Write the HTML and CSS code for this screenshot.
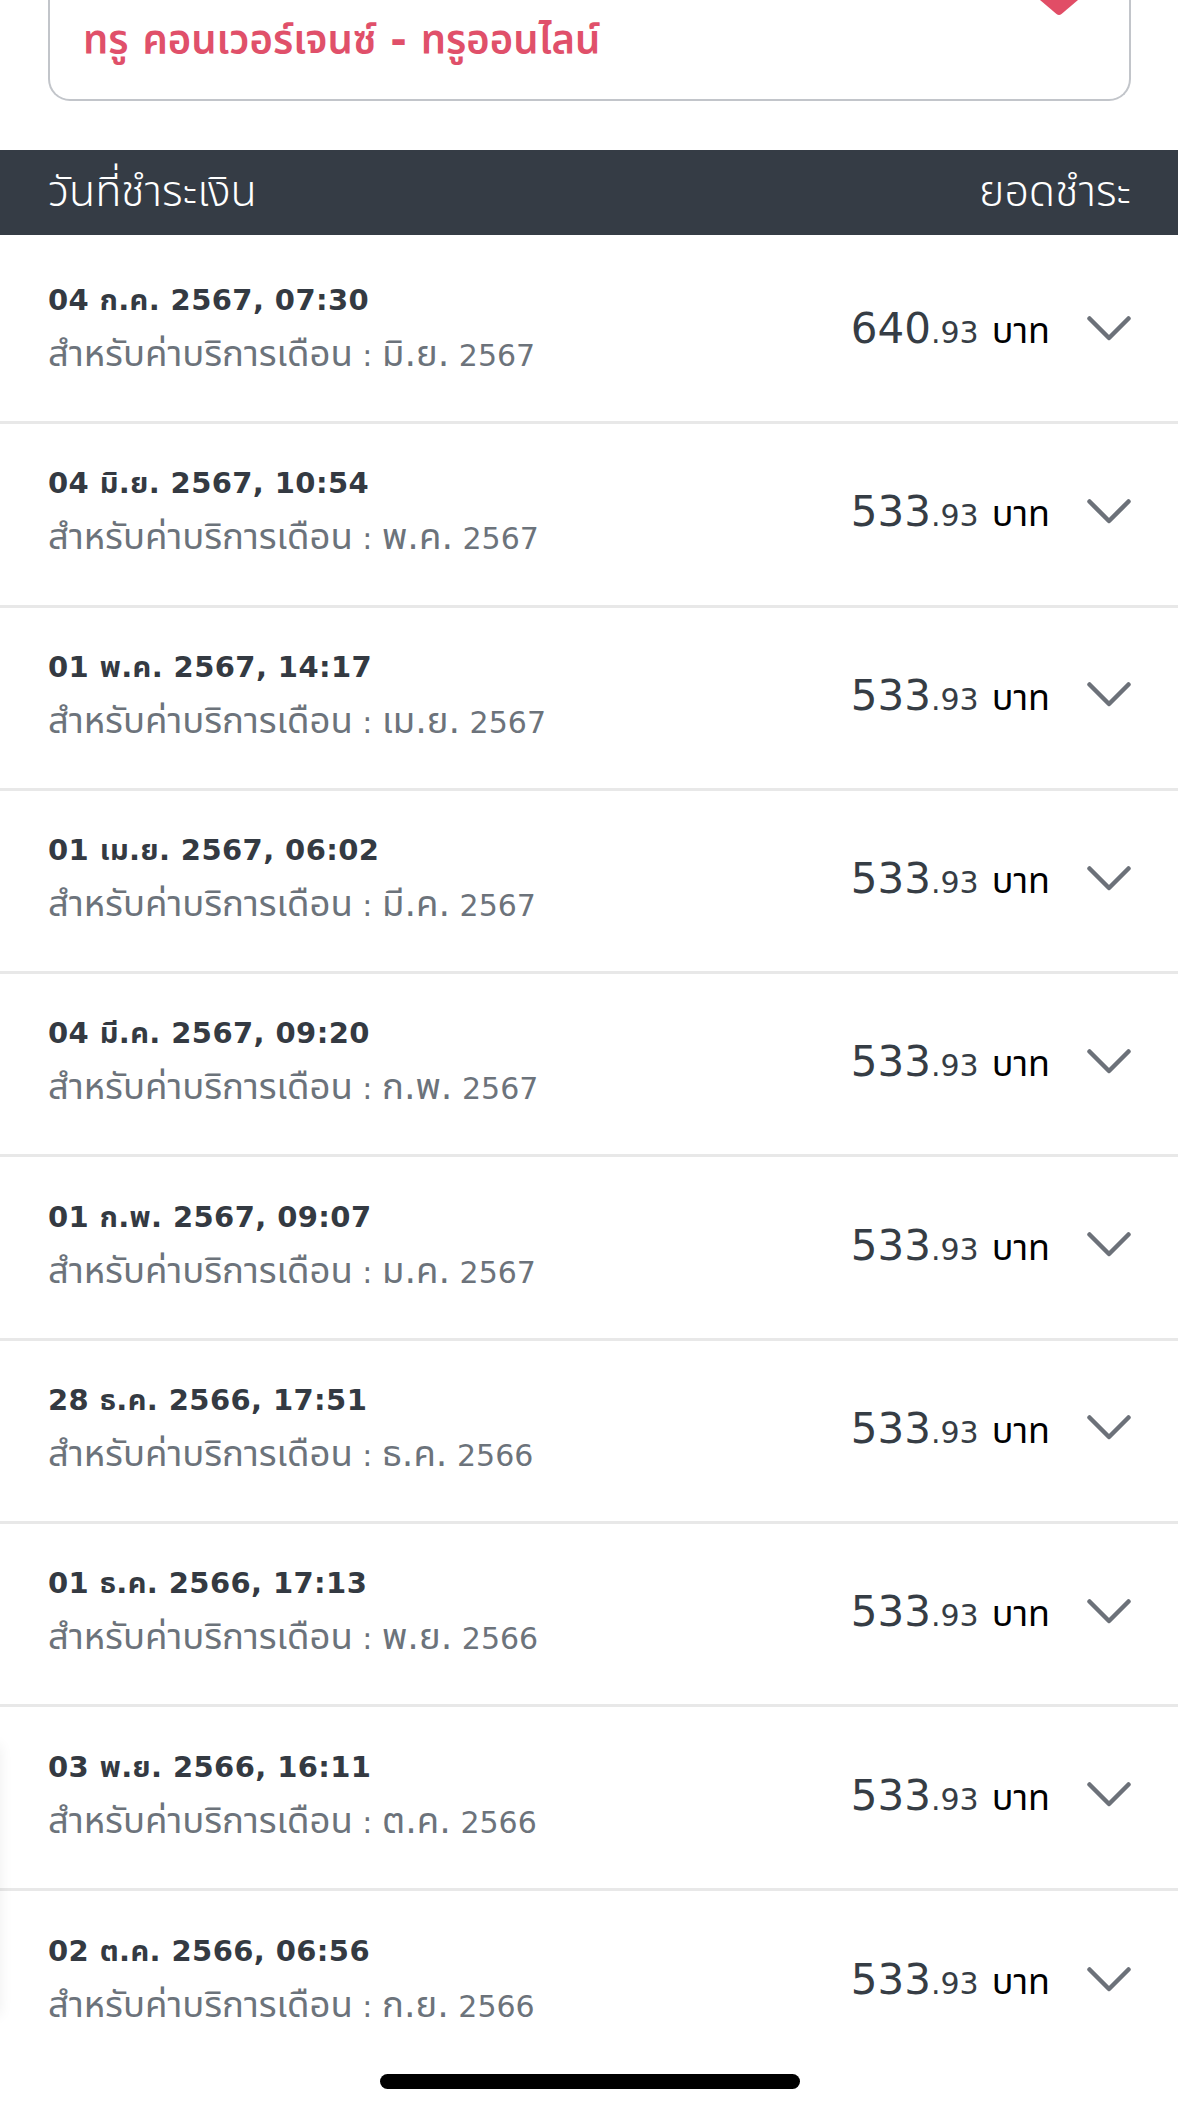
FILE: index.html
```html
<!DOCTYPE html>
<html>
<head>
  <meta name="viewport" content="width=device-width, initial-scale=1.0">
  <link rel="stylesheet" href="styles.css">
</head>

<body>
  <div class="picker">
    <span class="picker-title">ทรู คอนเวอร์เจนซ์ - ทรูออนไลน์</span>
    <svg class="picker-mark" width="40" height="16" viewBox="0 0 40 16">
      <path d="M1 0 H39 L22.5 14 Q20 16 17.5 14 Z" fill="#e14d66"/>
    </svg>
  </div>

  <div class="list-head">
    <span>วันที่ชำระเงิน</span>
    <span>ยอดชำระ</span>
  </div>

  <div class="rows">
    <div class="row">
      <div class="when">
        <div class="paid-on">04 ก.ค. 2567, 07:30</div>
        <div class="for-month"><span class="th">สำหรับค่าบริการเดือน</span> : <span class="th">มิ.ย.</span> 2567</div>
      </div>
      <div class="money"><span class="int">640</span><span class="dec">.93</span><span class="unit">บาท</span></div>
      <svg class="chev" width="44" height="25" viewBox="0 0 44 25"><path d="M2.5 2.5 L22 22 L41.5 2.5"/></svg>
    </div>
    <div class="row">
      <div class="when">
        <div class="paid-on">04 มิ.ย. 2567, 10:54</div>
        <div class="for-month"><span class="th">สำหรับค่าบริการเดือน</span> : <span class="th">พ.ค.</span> 2567</div>
      </div>
      <div class="money"><span class="int">533</span><span class="dec">.93</span><span class="unit">บาท</span></div>
      <svg class="chev" width="44" height="25" viewBox="0 0 44 25"><path d="M2.5 2.5 L22 22 L41.5 2.5"/></svg>
    </div>
    <div class="row">
      <div class="when">
        <div class="paid-on">01 พ.ค. 2567, 14:17</div>
        <div class="for-month"><span class="th">สำหรับค่าบริการเดือน</span> : <span class="th">เม.ย.</span> 2567</div>
      </div>
      <div class="money"><span class="int">533</span><span class="dec">.93</span><span class="unit">บาท</span></div>
      <svg class="chev" width="44" height="25" viewBox="0 0 44 25"><path d="M2.5 2.5 L22 22 L41.5 2.5"/></svg>
    </div>
    <div class="row">
      <div class="when">
        <div class="paid-on">01 เม.ย. 2567, 06:02</div>
        <div class="for-month"><span class="th">สำหรับค่าบริการเดือน</span> : <span class="th">มี.ค.</span> 2567</div>
      </div>
      <div class="money"><span class="int">533</span><span class="dec">.93</span><span class="unit">บาท</span></div>
      <svg class="chev" width="44" height="25" viewBox="0 0 44 25"><path d="M2.5 2.5 L22 22 L41.5 2.5"/></svg>
    </div>
    <div class="row">
      <div class="when">
        <div class="paid-on">04 มี.ค. 2567, 09:20</div>
        <div class="for-month"><span class="th">สำหรับค่าบริการเดือน</span> : <span class="th">ก.พ.</span> 2567</div>
      </div>
      <div class="money"><span class="int">533</span><span class="dec">.93</span><span class="unit">บาท</span></div>
      <svg class="chev" width="44" height="25" viewBox="0 0 44 25"><path d="M2.5 2.5 L22 22 L41.5 2.5"/></svg>
    </div>
    <div class="row">
      <div class="when">
        <div class="paid-on">01 ก.พ. 2567, 09:07</div>
        <div class="for-month"><span class="th">สำหรับค่าบริการเดือน</span> : <span class="th">ม.ค.</span> 2567</div>
      </div>
      <div class="money"><span class="int">533</span><span class="dec">.93</span><span class="unit">บาท</span></div>
      <svg class="chev" width="44" height="25" viewBox="0 0 44 25"><path d="M2.5 2.5 L22 22 L41.5 2.5"/></svg>
    </div>
    <div class="row">
      <div class="when">
        <div class="paid-on">28 ธ.ค. 2566, 17:51</div>
        <div class="for-month"><span class="th">สำหรับค่าบริการเดือน</span> : <span class="th">ธ.ค.</span> 2566</div>
      </div>
      <div class="money"><span class="int">533</span><span class="dec">.93</span><span class="unit">บาท</span></div>
      <svg class="chev" width="44" height="25" viewBox="0 0 44 25"><path d="M2.5 2.5 L22 22 L41.5 2.5"/></svg>
    </div>
    <div class="row">
      <div class="when">
        <div class="paid-on">01 ธ.ค. 2566, 17:13</div>
        <div class="for-month"><span class="th">สำหรับค่าบริการเดือน</span> : <span class="th">พ.ย.</span> 2566</div>
      </div>
      <div class="money"><span class="int">533</span><span class="dec">.93</span><span class="unit">บาท</span></div>
      <svg class="chev" width="44" height="25" viewBox="0 0 44 25"><path d="M2.5 2.5 L22 22 L41.5 2.5"/></svg>
    </div>
    <div class="row">
      <div class="when">
        <div class="paid-on">03 พ.ย. 2566, 16:11</div>
        <div class="for-month"><span class="th">สำหรับค่าบริการเดือน</span> : <span class="th">ต.ค.</span> 2566</div>
      </div>
      <div class="money"><span class="int">533</span><span class="dec">.93</span><span class="unit">บาท</span></div>
      <svg class="chev" width="44" height="25" viewBox="0 0 44 25"><path d="M2.5 2.5 L22 22 L41.5 2.5"/></svg>
    </div>
    <div class="row">
      <div class="when">
        <div class="paid-on">02 ต.ค. 2566, 06:56</div>
        <div class="for-month"><span class="th">สำหรับค่าบริการเดือน</span> : <span class="th">ก.ย.</span> 2566</div>
      </div>
      <div class="money"><span class="int">533</span><span class="dec">.93</span><span class="unit">บาท</span></div>
      <svg class="chev" width="44" height="25" viewBox="0 0 44 25"><path d="M2.5 2.5 L22 22 L41.5 2.5"/></svg>
    </div>
  </div>

  <div class="edge-card"></div>
  <div class="home-bar"></div>
</body>
</html>
```

FILE: styles.css
```css
body {
  margin: 0;
  background-color: #ffffff;
  font-family: "DejaVu Sans", "Noto Sans Thai", "Noto Sans", sans-serif;
  color: #343a42;
  height: 2113px;
  overflow: hidden;
}

/* provider picker, its top is scrolled off */
.picker {
  position: relative;
  margin: 0 47px 0 48px;
  height: 101px;
  box-sizing: border-box;
  border: 2px solid #c2c5ca;
  border-top: none;
  border-radius: 0 0 22px 22px;
  display: flex;
  align-items: center;
  padding: 0 0 16px 33px;
}

.picker-title {
  color: #e0506a;
  font-size: 40px;
  font-weight: 600;
}

.picker-mark {
  position: absolute;
  top: 0;
  right: 50px;
}

.list-head {
  margin-top: 49px;
  height: 85px;
  background-color: #353c45;
  color: #ffffff;
  display: flex;
  justify-content: space-between;
  align-items: center;
  padding: 0 47px 0 48px;
  font-size: 43px;
  font-weight: 300;
}

.rows {
  padding-top: 6px;
}

.row {
  height: 183.3px;
  box-sizing: border-box;
  border-bottom: 3px solid #e8e8e8;
  display: flex;
  align-items: center;
  padding: 0 47px 6px 48px;
}

.row:last-child {
  border-bottom: none;
}

.when {
  flex: 1;
}

.paid-on {
  font-size: 29px;
  font-weight: 700;
  letter-spacing: 0.4px;
  line-height: 55px;
}

.for-month {
  font-size: 30px;
  color: #6c737b;
  line-height: 55px;
}

.for-month .th {
  font-size: 36.5px;
  line-height: 1;
}

.money {
  display: flex;
  align-items: baseline;
  line-height: 48px;
  margin-top: 6px;
}

.int {
  font-size: 42px;
  color: #363d45;
}

.dec {
  font-size: 30px;
  color: #363d45;
}

.unit {
  font-size: 36px;
  color: #000000;
  margin-left: 13px;
}

.chev {
  margin-left: 37px;
  fill: none;
  stroke: #6c7179;
  stroke-width: 4.5;
  stroke-linecap: round;
  stroke-linejoin: round;
}

.edge-card {
  position: fixed;
  left: -24px;
  top: 1745px;
  width: 24px;
  height: 270px;
  background: #ffffff;
  box-shadow: 0 0 14px rgba(0, 0, 0, 0.07);
}

.home-bar {
  position: fixed;
  left: 380px;
  top: 2074px;
  width: 420px;
  height: 15px;
  border-radius: 8px;
  background-color: #000000;
}
```
